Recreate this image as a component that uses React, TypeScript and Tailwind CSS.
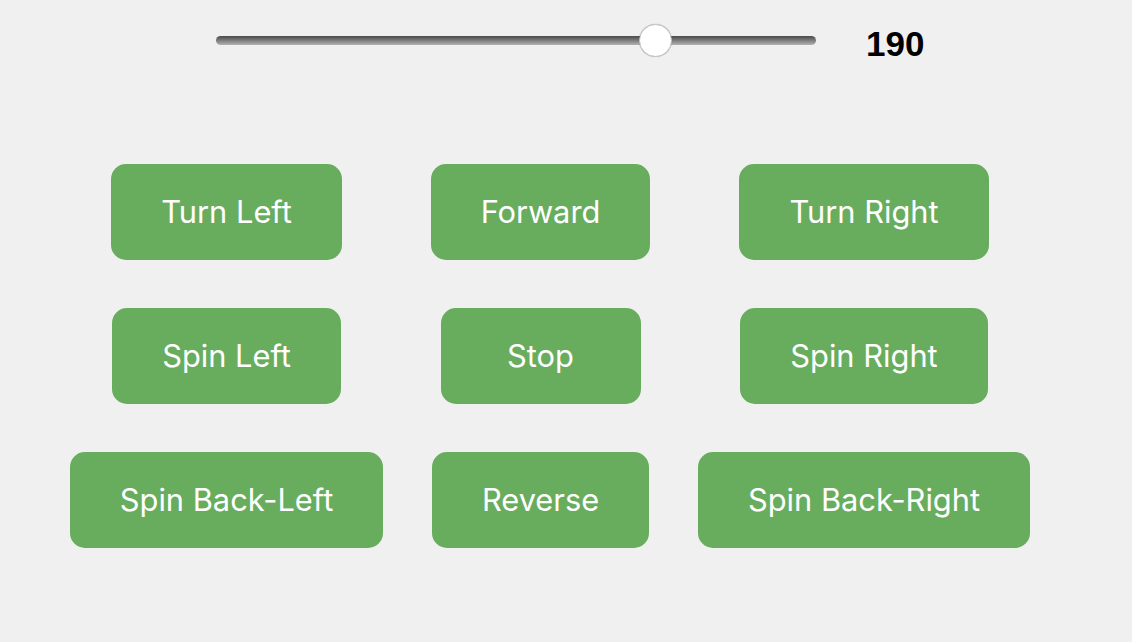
import { useState } from 'react';

const ROWS = [
  ['Turn Left', 'Forward', 'Turn Right'],
  ['Spin Left', 'Stop', 'Spin Right'],
  ['Spin Back-Left', 'Reverse', 'Spin Back-Right'],
];

const MAX = 255;

function SpeedSlider({ value }: { value: number }) {
  // thumb centre follows native range behaviour: inset by the thumb radius
  const left = 16 + (568 * value) / MAX - 16;
  return (
    <div className="relative w-[600px] h-[33px] flex items-center">
      <div className="w-full h-[9px] rounded-full bg-gradient-to-b from-[#4a4a4a] to-[#b4b4b4]" />
      <div
        className="absolute top-0 w-[33px] h-[33px] rounded-full bg-white border border-[#c4c4c4] shadow-[0_0_1px_rgba(0,0,0,0.3)]"
        style={{ left }}
      />
    </div>
  );
}

export default function App() {
  const [speed] = useState(190);

  return (
    <div className="w-[1132px] h-[642px] pt-[24px] bg-[#f0f0f0] font-['Inter',sans-serif]">
      <div className="flex items-center h-[33px] pl-[216px]">
        <SpeedSlider value={speed} />
        <span className="ml-[50px] mt-[6px] text-[35px] font-bold text-black font-['Liberation_Sans',Arial,sans-serif] leading-none">
          {speed}
        </span>
      </div>

      <div className="mt-[107px] pl-[46px] grid grid-cols-[361px_267px_380px] gap-y-[48px]">
        {ROWS.flat().map((label) => (
          <div key={label} className="flex justify-center">
            <button className="h-[96px] min-w-[200px] px-[50px] rounded-[15px] bg-[#67ad5d] text-white text-[30.8px] leading-none">
              {label}
            </button>
          </div>
        ))}
      </div>
    </div>
  );
}
